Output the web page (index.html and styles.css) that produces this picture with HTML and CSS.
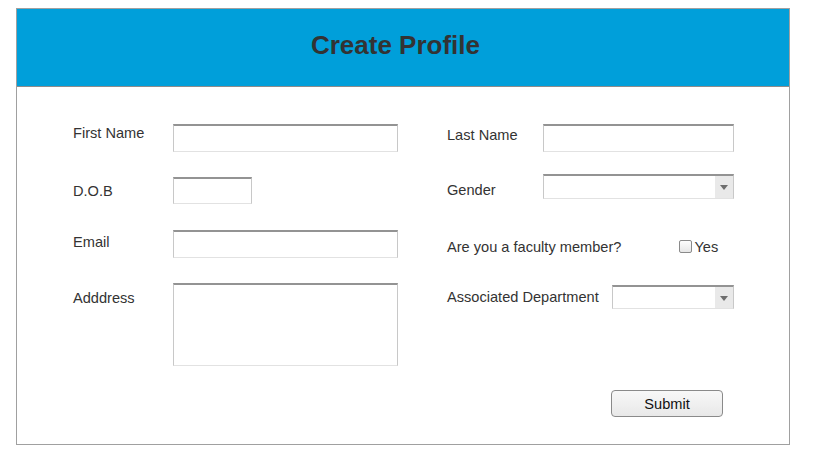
FILE: index.html
```html
<!DOCTYPE html>
<html lang="en">
<head>
    <meta charset="UTF-8">
    <meta name="viewport" content="width=device-width, initial-scale=1.0">
    <title>Create Profile</title>
    <link rel="stylesheet" href="styles.css">
</head>
<body>
    <div class="profile">
        <div class="profile-header">
            <h1>Create Profile</h1>
        </div>
        <form class="profile-form" onsubmit="return false;">
            <div class="form-grid">
                <div class="field">
                    <label class="label-left pad-1" for="firstName">First Name</label>
                    <input type="text" id="firstName" class="text-input wide">
                </div>
                <div class="field">
                    <label class="pad-3" for="lastName">Last Name</label>
                    <input type="text" id="lastName" class="text-input right-wide">
                </div>

                <div class="field">
                    <label class="label-left pad-6" for="dob">D.O.B</label>
                    <input type="text" id="dob" class="text-input short">
                </div>
                <div class="field">
                    <label class="pad-5" for="gender">Gender</label>
                    <div class="select select-gender" id="gender"></div>
                </div>

                <div class="field">
                    <label class="label-left pad-4" for="email">Email</label>
                    <input type="text" id="email" class="text-input wide">
                </div>
                <div class="field field-check">
                    <span class="check-label">Are you a faculty member?</span>
                    <label class="check">
                        <input type="checkbox" class="checkbox">
                        <span>Yes</span>
                    </label>
                </div>

                <div class="field">
                    <label class="label-left pad-7" for="address">Adddress</label>
                    <textarea id="address" class="text-input wide address"></textarea>
                </div>
                <div class="field">
                    <label class="pad-6" for="department">Associated Department</label>
                    <div class="select select-dept" id="department"></div>
                </div>
            </div>
            <div class="actions">
                <button type="submit" class="submit-btn">Submit</button>
            </div>
        </form>
    </div>
</body>
</html>
```

FILE: styles.css
```css
body {
    font-family: "Liberation Sans", Arial, sans-serif;
    margin: 0;
    padding: 8px 0 0 16px;
    background-color: #fff;
    color: #333;
}

.profile {
    width: 774px;
    box-sizing: border-box;
    border: 1px solid #a0a0a0;
}

.profile-header {
    height: 78px;
    box-sizing: border-box;
    background-color: #009fda;
    border-bottom: 1px solid #8c8c8c;
    display: flex;
    align-items: center;
    justify-content: center;
    padding: 0 15px 4px 0;
}

.profile-header h1 {
    margin: 0;
    font-size: 26px;
    font-weight: bold;
    color: #333;
}

.profile-form {
    padding: 37px 55px 27px 56px;
}

.form-grid {
    display: grid;
    grid-template-columns: 325px 287px;
    grid-template-rows: 28px 28px 28px 83px;
    column-gap: 49px;
    row-gap: 25px;
}

.field {
    display: flex;
    align-items: flex-start;
    font-size: 14.6px;
}

.field label,
.check-label {
    flex: none;
    color: #333;
}

.label-left {
    width: 100px;
}

.pad-1 { padding-top: 1px; }
.pad-3 { padding-top: 3px; }
.pad-4 { padding-top: 4px; }
.pad-5 { padding-top: 5px; }
.pad-6 { padding-top: 6px; }
.pad-7 { padding-top: 7px; }

.text-input {
    box-sizing: border-box;
    height: 28px;
    margin: 0;
    padding: 2px 4px;
    background: #fff;
    border: 1px solid #c8c8c8;
    border-top: 2px solid #939393;
    border-bottom-color: #e2e2e2;
    font-family: inherit;
    font-size: 14px;
}

.wide {
    width: 225px;
}

.short {
    width: 79px;
    height: 27px;
}

.right-wide {
    width: 191px;
    margin-left: auto;
}

.address {
    height: 83px;
    resize: none;
}

.select {
    position: relative;
    box-sizing: border-box;
    margin-left: auto;
    background: #fff;
    border: 1px solid #c8c8c8;
    border-top: 2px solid #939393;
    border-bottom-color: #e2e2e2;
}

.select::before {
    content: "";
    position: absolute;
    top: 0;
    right: 0;
    bottom: 0;
    width: 18px;
    background-color: #e9e9e9;
}

.select::after {
    content: "";
    position: absolute;
    right: 5px;
    top: 50%;
    margin-top: -2px;
    border-left: 4px solid transparent;
    border-right: 4px solid transparent;
    border-top: 5px solid #6e6e6e;
}

.select-gender {
    width: 191px;
    height: 25px;
    margin-top: -3px;
}

.select-dept {
    width: 122px;
    height: 24px;
    margin-top: 2px;
}

.field-check {
    align-items: center;
    padding-top: 8px;
    height: 17px;
}

.check {
    display: flex;
    align-items: center;
    margin-left: 58px;
    color: #333;
}

.checkbox {
    appearance: none;
    -webkit-appearance: none;
    width: 13px;
    height: 13px;
    margin: 0 2px 0 0;
    border: 1px solid #8a8a8a;
    border-radius: 2px;
    background: linear-gradient(#fdfdfd, #e6e6e6);
}

.actions {
    display: flex;
    justify-content: flex-end;
    margin-top: 24px;
}

.submit-btn {
    width: 112px;
    height: 27px;
    margin-right: 11px;
    border: 1px solid #8a8a8a;
    border-radius: 4px;
    background: linear-gradient(#f8f8f8, #e8e8e8);
    font-family: inherit;
    font-size: 14.6px;
    color: #111;
    cursor: pointer;
}

.submit-btn:hover {
    background: linear-gradient(#ffffff, #efefef);
}
```
